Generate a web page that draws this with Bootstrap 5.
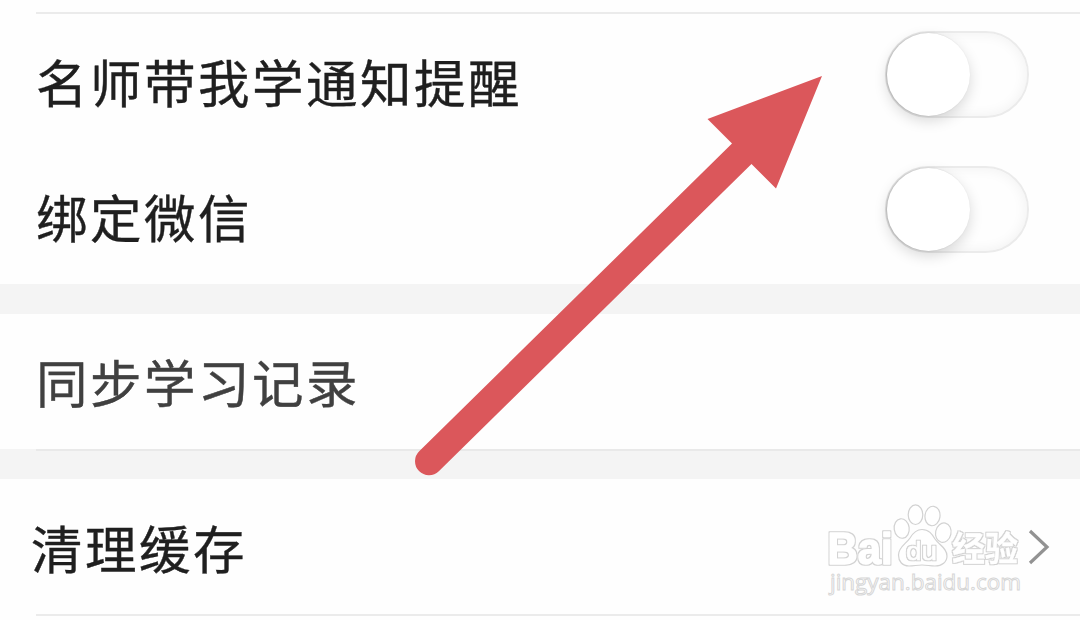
<!DOCTYPE html>
<html lang="zh-CN">
<head>
  <meta charset="UTF-8" />
  <meta name="viewport" content="width=device-width, initial-scale=1" />
  <title>设置</title>
  <link href="https://cdn.jsdelivr.net/npm/bootstrap@5.3.0/dist/css/bootstrap.min.css" rel="stylesheet" />
  <style>
    body {
      font-family: "Noto Sans CJK SC", "Noto Sans", sans-serif;
      background: #fefefe;
    }
    .screen {
      width: 1080px;
      height: 620px;
      padding-top: 12px;
    }
    .rule {
      height: 2px;
      margin-left: 36px;
      background: #ebebeb;
    }
    .setting {
      height: 135px;
      padding: 0 51px 0 36px;
    }
    .setting-label {
      font-size: 51.5px;
      line-height: 1;
      letter-spacing: 2.5px;
      color: #1f1f1f;
      padding-bottom: 2px;
      -webkit-text-stroke: .4px currentColor;
    }
    .sync .setting-label { color: #404040; }
    .cache { padding-left: 31px; padding-right: 30px; }
    .cache .setting-label { padding-bottom: 0; }
    .band {
      height: 30px;
      background: #f4f4f4;
    }
    .band .rule { background: #e9e9e9; }
    .toggle {
      width: 144px;
      height: 87px;
      border-radius: 44px;
      border: 2px solid #ebebeb;
      box-shadow: inset 0 0 14px rgba(0, 0, 0, .06);
      margin-top: -14px;
    }
    .toggle-knob {
      width: 83px;
      height: 83px;
      background: #fff;
      box-shadow: -1px 0 2px rgba(0, 0, 0, .2), 0 5px 14px rgba(0, 0, 0, .15);
    }
    .overlay { pointer-events: none; }
    .latin { font-family: "Liberation Sans", Arial, sans-serif; }
    .site { font-family: "Open Sans", sans-serif; }
  </style>
</head>
<body>
  <main class="screen position-relative overflow-hidden">
    <div class="rule"></div>
    <div class="setting d-flex align-items-center justify-content-between">
      <div class="setting-label">名师带我学通知提醒</div>
      <div class="toggle" role="switch" aria-checked="false"><div class="toggle-knob rounded-circle"></div></div>
    </div>
    <div class="setting d-flex align-items-center justify-content-between">
      <div class="setting-label">绑定微信</div>
      <div class="toggle" role="switch" aria-checked="false"><div class="toggle-knob rounded-circle"></div></div>
    </div>
    <div class="band"></div>
    <div class="setting sync d-flex align-items-center">
      <div class="setting-label">同步学习记录</div>
    </div>
    <div class="band"><div class="rule"></div></div>
    <div class="setting cache d-flex align-items-center justify-content-between">
      <div class="setting-label">清理缓存</div>
      <svg width="22" height="38" viewBox="0 0 22 38" fill="none" stroke="#929292" stroke-width="3.2">
        <path d="M2 3 L19 19 L2 35" />
      </svg>
    </div>
    <div class="rule"></div>

    <!-- arrow and watermark lie over the list -->
    <svg class="overlay position-absolute top-0 start-0" width="1080" height="620" viewBox="0 0 1080 620">
      <defs>
        <!-- grey rim around the white letters -->
        <filter id="rim" x="-5%" y="-20%" width="110%" height="140%">
          <feMorphology in="SourceAlpha" operator="dilate" radius="1" result="grown" />
          <feFlood flood-color="#d2d2d2" />
          <feComposite in2="grown" operator="in" result="edge" />
          <feMerge>
            <feMergeNode in="edge" />
            <feMergeNode in="SourceGraphic" />
          </feMerge>
        </filter>
      </defs>
      <path fill="#db575b" d="M822 76 L776 188.500 L751.500 164 L438.800 471.200 A14 14 0 0 1 419.200 451.200 L732 143.500 L707.500 119 Z" />
      <g fill="#fff" stroke="#d2d2d2" stroke-width="1.200">
        <ellipse cx="901.700" cy="528.500" rx="7.500" ry="9.800" transform="rotate(-8 901.700 528.500)" />
        <ellipse cx="915.500" cy="514.700" rx="7.300" ry="9.800" />
        <ellipse cx="932.500" cy="516" rx="7.500" ry="9.800" transform="rotate(8 932.500 516)" />
        <ellipse cx="943.300" cy="532.700" rx="7.700" ry="9.800" transform="rotate(12 943.300 532.700)" />
        <path d="M922 529.500 C929 529.500 932 534 935 539 C939 545 947 548 947 556 C947 562 942 566 935 566 C930 566 927 565 922 565 C917 565 914 566 909 566 C902 566 898.500 561 898.500 555 C898.500 547 906 544 910 538 C913 533 916 529.500 922 529.500 Z" />
      </g>
      <g filter="url(#rim)" fill="#fff" stroke="#fff" stroke-linejoin="round" font-weight="700" color-interpolation-filters="sRGB">
        <text class="latin" x="827.500" y="563.500" font-size="43.500" stroke-width="1.500" textLength="65" lengthAdjust="spacingAndGlyphs">Bai</text>
        <text class="latin" x="906" y="559.500" font-size="26" font-weight="400" stroke-width=".6" textLength="31" lengthAdjust="spacingAndGlyphs">du</text>
        <text x="952" y="561" font-size="34" stroke-width=".3" textLength="66" lengthAdjust="spacingAndGlyphs">经验</text>
      </g>
      <text class="site" x="830" y="590" font-size="22.500" fill="#fff" stroke="#d6d6d6" stroke-width="1" textLength="191" lengthAdjust="spacingAndGlyphs">jingyan.baidu.com</text>
    </svg>
  </main>
  <script src="https://cdn.jsdelivr.net/npm/bootstrap@5.3.0/dist/js/bootstrap.bundle.min.js"></script>
</body>
</html>
